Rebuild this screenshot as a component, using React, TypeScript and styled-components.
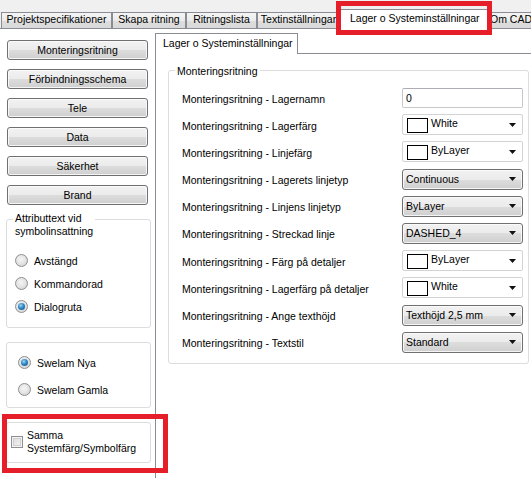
import React from 'react';
import styled, { createGlobalStyle, css } from 'styled-components';

const Global = createGlobalStyle`
  html, body { margin: 0; padding: 0; background: #ffffff; }
  body {
    font-family: "Liberation Sans", Arial, sans-serif;
    font-size: 10.5px;
    color: #000000;
    overflow: hidden;
  }
  #root { width: 531px; height: 478px; }
`;

const Root = styled.div`
  position: relative;
  width: 531px;
  height: 478px;
  overflow: hidden;
  display: flex;
  flex-direction: column;
  background: #ffffff;
`;

/* ---------- top tab strip ---------- */
const TabStrip = styled.div`
  flex: none;
  height: 29px;
  box-sizing: border-box;
  background: #f0f0f0;
  border-bottom: 1px solid #898c95;
  display: flex;
  align-items: flex-end;
  padding-left: 1px;
  white-space: nowrap;
`;

const TopTab = styled.div<{ $w: number; $active?: boolean; $left?: boolean }>`
  flex: none;
  box-sizing: border-box;
  width: ${(p) => p.$w}px;
  height: 17px;
  margin-bottom: -1px;
  border: 1px solid #898c95;
  background: linear-gradient(#f4f4f4, #ebebeb 50%, #dedede 51%, #d9d9d9);
  line-height: 13px;
  text-align: ${(p) => (p.$left ? 'left' : 'center')};
  padding-left: ${(p) => (p.$left ? '1px' : '0')};
  overflow: hidden;
  ${(p) =>
    p.$active &&
    css`
      height: 20px;
      border-bottom: none;
      background: #ffffff;
      position: relative;
      z-index: 1;
      text-align: left;
      padding-left: 9px;
      line-height: 16px;
    `}
`;

/* ---------- body ---------- */
const Body = styled.div`
  flex: 1;
  display: flex;
  min-height: 0;
`;

const LeftPanel = styled.div`
  flex: none;
  width: 155px;
  padding-top: 11px;
  display: flex;
  flex-direction: column;
`;

const ButtonStack = styled.div`
  display: flex;
  flex-direction: column;
  gap: 9px;
  padding-left: 7px;
`;

const winGradient = css`
  border: 1px solid #707070;
  border-radius: 3px;
  background: linear-gradient(#f2f2f2 0%, #ebebeb 50%, #dddddd 50%, #cfcfcf 100%);
  box-shadow: inset 0 0 0 1px rgba(252, 252, 252, 0.85);
`;

const WinButton = styled.div`
  box-sizing: border-box;
  width: 141px;
  height: 20px;
  ${winGradient}
  text-align: center;
  line-height: 18px;
`;

const LeftGroup = styled.div<{ $pt?: number; $pb?: number }>`
  box-sizing: border-box;
  width: 145px;
  margin: 14px 0 0 6px;
  border: 1px solid #dcdcdc;
  border-radius: 3px;
  padding-top: ${(p) => p.$pt ?? 0}px;
  padding-bottom: ${(p) => p.$pb ?? 0}px;
  &:first-of-type { margin-top: 15px; }
`;

const GroupTitle = styled.div<{ $mt?: number }>`
  width: fit-content;
  margin: ${(p) => p.$mt ?? -8}px 0 0 6px;
  padding: 0 2px;
  background: #ffffff;
  line-height: 13px;
`;

const OptionList = styled.div<{ $pt: number }>`
  padding-top: ${(p) => p.$pt}px;
  display: flex;
  flex-direction: column;
`;

const OptionRow = styled.div<{ $h: number; $pl: number }>`
  height: ${(p) => p.$h}px;
  display: flex;
  align-items: center;
  gap: 6px;
  padding-left: ${(p) => p.$pl}px;
`;

const Radio = styled.span<{ $on?: boolean }>`
  position: relative;
  flex: none;
  box-sizing: border-box;
  width: 13px;
  height: 13px;
  border-radius: 50%;
  border: 1px solid #8e8f8f;
  background: radial-gradient(circle at 45% 40%, #f4f4f4 0%, #e6e6e6 45%, #c9c9c9 100%);
  ${(p) =>
    p.$on &&
    css`
      &::after {
        content: '';
        position: absolute;
        left: 2px;
        top: 2px;
        width: 7px;
        height: 7px;
        border-radius: 50%;
        background: radial-gradient(circle at 40% 35%, #9fd7f7 0%, #2f86c6 45%, #144c7c 100%);
      }
    `}
`;

const CheckRow = styled.div`
  display: flex;
  align-items: center;
  gap: 4px;
  padding-left: 4px;
`;

const CheckBox = styled.span`
  flex: none;
  box-sizing: border-box;
  width: 12px;
  height: 12px;
  border: 1px solid #8e8f8f;
  background: linear-gradient(135deg, #d9d9d9, #f5f5f5);
  box-shadow: inset 0 0 0 1px #f4f4f4, inset 0 0 0 2px #cfcfcf;
`;

const TwoLine = styled.div`
  line-height: 13px;
`;

/* ---------- inner tab control ---------- */
const InnerTabs = styled.div`
  flex: 1;
  display: flex;
  flex-direction: column;
  padding-top: 4px;
  min-width: 0;
`;

const InnerTabRow = styled.div`
  display: flex;
`;

const InnerTab = styled.div`
  box-sizing: border-box;
  width: 143px;
  height: 21px;
  margin-bottom: -1px;
  border: 1px solid #898c95;
  border-bottom: none;
  background: #ffffff;
  position: relative;
  z-index: 1;
  padding-left: 7px;
  line-height: 18px;
  white-space: nowrap;
`;

const InnerPage = styled.div`
  flex: 1;
  border-top: 1px solid #898c95;
  border-left: 1px solid #898c95;
  padding: 16px 0 0 12px;
`;

const RightGroup = styled.div`
  box-sizing: border-box;
  width: 361px;
  border: 1px solid #dcdcdc;
  border-radius: 3px;
  padding: 0 5px 10px 0;
`;

const Rows = styled.div`
  margin-top: 9px;
  padding-left: 13px;
  display: flex;
  flex-direction: column;
  gap: 6.2px;
`;

const Row = styled.div`
  height: 21px;
  display: flex;
  align-items: center;
  justify-content: space-between;
`;

const RowLabel = styled.span`
  padding-top: 2px;
  white-space: nowrap;
`;

const TextBox = styled.div`
  box-sizing: border-box;
  width: 121px;
  height: 20px;
  border: 1px solid #c6c8cc;
  border-top-color: #abadb3;
  border-radius: 2px;
  background: #ffffff;
  padding-left: 3px;
  line-height: 18px;
`;

const ColorCombo = styled.div`
  box-sizing: border-box;
  width: 121px;
  height: 21px;
  border: 1px solid #d3d3d3;
  border-radius: 2px;
  background: #ffffff;
  display: flex;
  align-items: flex-start;
  padding: 0 6px 0 4px;
`;

const Swatch = styled.span<{ $c: string }>`
  flex: none;
  box-sizing: border-box;
  width: 21px;
  height: 15px;
  margin-top: 3px;
  border: 1px solid #000000;
  background: ${(p) => p.$c};
`;

const ComboText = styled.span`
  margin-left: 3px;
  padding-top: 2px;
  line-height: 13px;
`;

const DropList = styled.div`
  box-sizing: border-box;
  width: 121px;
  height: 21px;
  ${winGradient}
  display: flex;
  align-items: center;
  padding: 0 6px 0 3px;
`;

const ArrowBox = styled.span`
  margin-left: auto;
  align-self: center;
  display: flex;
`;

const Arrow = () => (
  <ArrowBox>
    <svg width="7" height="4" viewBox="0 0 7 4">
      <path d="M0 0 H7 L3.5 4 Z" fill="#111" />
    </svg>
  </ArrowBox>
);

/* ---------- annotation overlays ---------- */
const RedMark = styled.div<{ $x: number; $y: number; $w: number; $h: number }>`
  position: absolute;
  left: ${(p) => p.$x}px;
  top: ${(p) => p.$y}px;
  width: ${(p) => p.$w}px;
  height: ${(p) => p.$h}px;
  box-sizing: border-box;
  border: 5px solid #e61e2a;
  z-index: 5;
  pointer-events: none;
`;

type RowDef = { label: string; kind: 'text' | 'color' | 'list'; value: string };

const topTabs = [
  { label: 'Projektspecifikationer', w: 111 },
  { label: 'Skapa ritning', w: 74 },
  { label: 'Ritningslista', w: 71 },
  { label: 'Textinställningar', w: 83 },
  { label: 'Lager o Systeminställningar', w: 148, active: true },
  { label: 'Om CADe', w: 80, left: true },
];

const buttons = ['Monteringsritning', 'Förbindningsschema', 'Tele', 'Data', 'Säkerhet', 'Brand'];

const rows: RowDef[] = [
  { label: 'Monteringsritning - Lagernamn', kind: 'text', value: '0' },
  { label: 'Monteringsritning - Lagerfärg', kind: 'color', value: 'White' },
  { label: 'Monteringsritning - Linjefärg', kind: 'color', value: 'ByLayer' },
  { label: 'Monteringsritning - Lagerets linjetyp', kind: 'list', value: 'Continuous' },
  { label: 'Monteringsritning - Linjens linjetyp', kind: 'list', value: 'ByLayer' },
  { label: 'Monteringsritning - Streckad linje', kind: 'list', value: 'DASHED_4' },
  { label: 'Monteringsritning - Färg på detaljer', kind: 'color', value: 'ByLayer' },
  { label: 'Monteringsritning - Lagerfärg på detaljer', kind: 'color', value: 'White' },
  { label: 'Monteringsritning - Ange texthöjd', kind: 'list', value: 'Texthöjd 2,5 mm' },
  { label: 'Monteringsritning - Textstil', kind: 'list', value: 'Standard' },
];

const Control = ({ r }: { r: RowDef }) => {
  if (r.kind === 'text') return <TextBox>{r.value}</TextBox>;
  if (r.kind === 'color')
    return (
      <ColorCombo>
        <Swatch $c="#ffffff" />
        <ComboText>{r.value}</ComboText>
        <Arrow />
      </ColorCombo>
    );
  return (
    <DropList>
      <span>{r.value}</span>
      <Arrow />
    </DropList>
  );
};

export default function App() {
  return (
    <Root>
      <Global />
      <TabStrip>
        {topTabs.map((t) => (
          <TopTab key={t.label} $w={t.w} $active={t.active} $left={t.left}>
            {t.label}
          </TopTab>
        ))}
      </TabStrip>
      <Body>
        <LeftPanel>
          <ButtonStack>
            {buttons.map((b) => (
              <WinButton key={b}>{b}</WinButton>
            ))}
          </ButtonStack>
          <LeftGroup $pb={9}>
            <GroupTitle>
              Attributtext vid
              <br />
              symbolinsattning
            </GroupTitle>
            <OptionList $pt={11}>
              <OptionRow $h={23} $pl={8}>
                <Radio />
                Avstängd
              </OptionRow>
              <OptionRow $h={23} $pl={8}>
                <Radio />
                Kommandorad
              </OptionRow>
              <OptionRow $h={23} $pl={8}>
                <Radio $on />
                Dialogruta
              </OptionRow>
            </OptionList>
          </LeftGroup>
          <LeftGroup $pb={4}>
            <OptionList $pt={6}>
              <OptionRow $h={27} $pl={11}>
                <Radio $on />
                Swelam Nya
              </OptionRow>
              <OptionRow $h={27} $pl={11}>
                <Radio />
                Swelam Gamla
              </OptionRow>
            </OptionList>
          </LeftGroup>
          <LeftGroup $pt={6} $pb={7}>
            <CheckRow>
              <CheckBox />
              <TwoLine>
                Samma
                <br />
                Systemfärg/Symbolfärg
              </TwoLine>
            </CheckRow>
          </LeftGroup>
        </LeftPanel>
        <InnerTabs>
          <InnerTabRow>
            <InnerTab>Lager o Systeminställningar</InnerTab>
          </InnerTabRow>
          <InnerPage>
            <RightGroup>
              <GroupTitle $mt={-6}>Monteringsritning</GroupTitle>
              <Rows>
                {rows.map((r) => (
                  <Row key={r.label}>
                    <RowLabel>{r.label}</RowLabel>
                    <Control r={r} />
                  </Row>
                ))}
              </Rows>
            </RightGroup>
          </InnerPage>
        </InnerTabs>
      </Body>
      <RedMark $x={336} $y={1} $w={156} $h={34} />
      <RedMark $x={2} $y={414} $w={166} $h={59} />
    </Root>
  );
}
